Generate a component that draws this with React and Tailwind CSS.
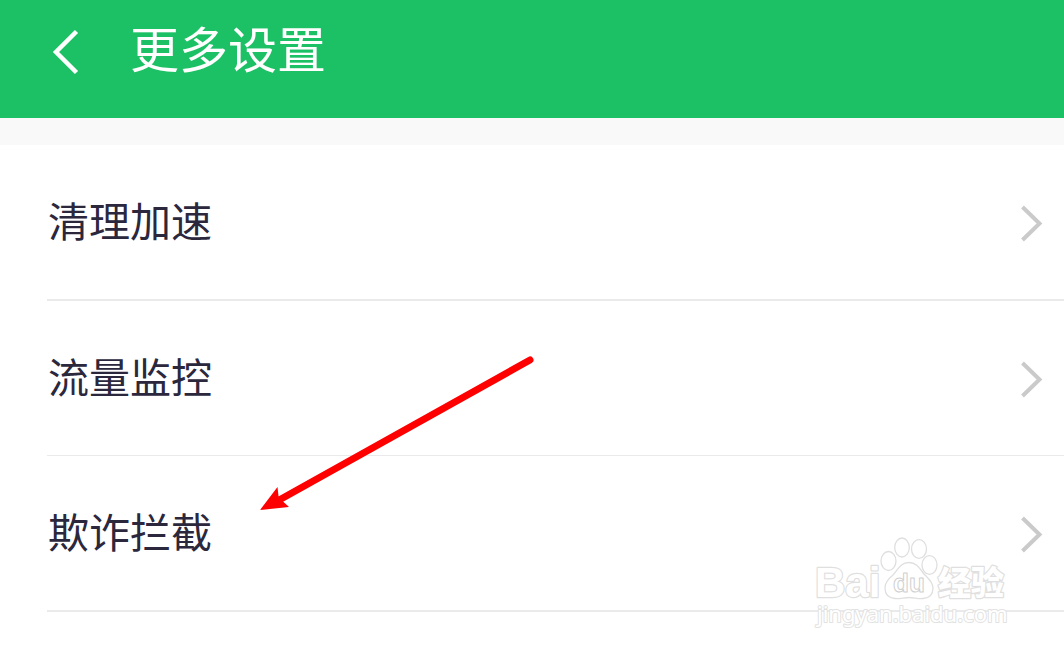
const rows = [
  { label: '清理加速', line: 'border-b-2' },
  { label: '流量监控', line: 'border-b' },
  { label: '欺诈拦截', line: 'border-b-2' },
];

function Header() {
  return (
    <header className="flex h-[118px] items-center bg-[#1dc165] pb-[18px] pl-[48px] text-white">
      <button type="button" aria-label="返回" className="mt-1 mr-[46px] shrink-0">
        <svg className="block h-[48px] w-[36px]" viewBox="0 0 36 48" fill="none" stroke="currentColor" strokeWidth="4.500">
          <path d="M28.5 3.5 8 24l20.5 20.5" />
        </svg>
      </button>
      <h1 className="pb-[6px] text-[49px] leading-[72px] font-normal">更多设置</h1>
    </header>
  );
}

function SettingRow({ label, line }) {
  return (
    <li className={`ml-[47px] border-[#eaeaea] ${line}`}>
      <button type="button" className="flex h-[154px] w-full items-center justify-between pr-[20px] pl-px text-left">
        <span className="pb-[6px] text-[41px] leading-[60px] text-[#2b273d]">{label}</span>
        <svg className="mt-[3px] block h-[40px] w-[24px]" viewBox="0 0 24 40" fill="none" stroke="#cacaca" strokeWidth="4" aria-hidden="true">
          <path d="M2.5 3 19.5 19.500l-17 16.5" />
        </svg>
      </button>
    </li>
  );
}

function Arrow() {
  return (
    <svg className="pointer-events-none absolute top-[350px] left-[250px] h-[170px] w-[290px]" viewBox="250 350 290 170" aria-hidden="true">
      <path d="M530 360 281 499" stroke="#fe0000" strokeWidth="7" strokeLinecap="round" />
      <path d="M260 510 277.500 487 278.500 496 283 501.500 289 507Z" fill="#fe0000" />
    </svg>
  );
}

function Watermark() {
  return (
    <svg
      className="pointer-events-none absolute top-[532px] right-[52px] h-[100px] w-[204px]"
      viewBox="808 532 204 100"
      fill="#fff"
      stroke="#dfdfdf"
      strokeWidth="1.300"
      strokeLinejoin="round"
    >
      <g fontWeight="700" strokeWidth="2.500" paintOrder="stroke">
        <text x="815" y="597" fontSize="42" fontFamily="Liberation Sans">Bai</text>
        <text x="938" y="595" fontSize="33" fontFamily="Noto Sans CJK SC" fontWeight="900">经验</text>
      </g>
      <ellipse cx="888.500" cy="561" rx="7.500" ry="9.500" />
      <ellipse cx="902" cy="547.500" rx="7.300" ry="9.500" />
      <ellipse cx="919" cy="549" rx="7.500" ry="9.300" />
      <ellipse cx="929.500" cy="565" rx="7.500" ry="9.300" />
      <path d="M909 562.500C900 562.500 898 570 893 575C888 579 885 583 885 588C885 595 889 598 895 598.500C900 599 904 597.500 909 597.500C914 597.500 918 599 923 598.500C930 598 933 594 933 588C933 582 928 578 924 574C920 569 917 562.500 909 562.500Z" />
      <text x="893" y="592" fontSize="26" fontFamily="Liberation Sans" fontWeight="700" stroke="#d0d0d0" strokeWidth="1">du</text>
      <text x="817" y="622" fontSize="22" fontFamily="Noto Sans" stroke="#e2e2e2" strokeWidth="2" paintOrder="stroke">jingyan.baidu.com</text>
    </svg>
  );
}

export default function App() {
  return (
    <div className="relative min-h-screen overflow-hidden bg-white font-['Noto_Sans_CJK_SC',sans-serif]">
      <Header />
      <main className="border-t-[27px] border-[#f9f9f9]">
        <ul>
          {rows.map((row) => (
            <SettingRow key={row.label} {...row} />
          ))}
        </ul>
      </main>
      <Arrow />
      <Watermark />
    </div>
  );
}
